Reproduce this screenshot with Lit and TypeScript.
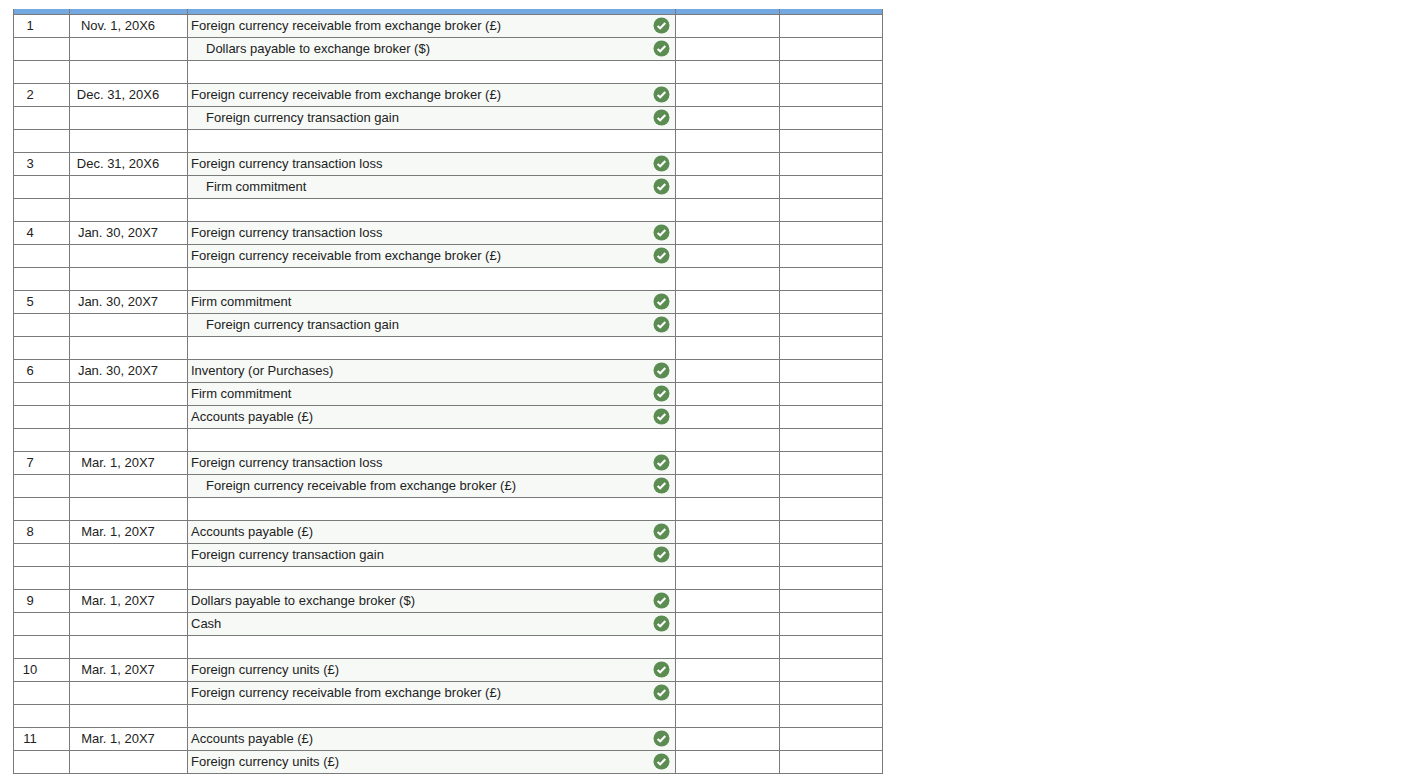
import { LitElement, html, css } from "lit";
import { customElement } from "lit/decorators.js";

interface Line { text: string; indent?: boolean }
interface Entry { no: number; date: string; lines: Line[]; blank: boolean }

const FX = "Foreign currency receivable from exchange broker (£)";
const GAIN = "Foreign currency transaction gain";
const LOSS = "Foreign currency transaction loss";
const FIRM = "Firm commitment";
const AP = "Accounts payable (£)";
const DOLL = "Dollars payable to exchange broker ($)";

const entries: Entry[] = [
  { no: 1, date: "Nov. 1, 20X6", lines: [{ text: FX }, { text: DOLL, indent: true }], blank: true },
  { no: 2, date: "Dec. 31, 20X6", lines: [{ text: FX }, { text: GAIN, indent: true }], blank: true },
  { no: 3, date: "Dec. 31, 20X6", lines: [{ text: LOSS }, { text: FIRM, indent: true }], blank: true },
  { no: 4, date: "Jan. 30, 20X7", lines: [{ text: LOSS }, { text: FX }], blank: true },
  { no: 5, date: "Jan. 30, 20X7", lines: [{ text: FIRM }, { text: GAIN, indent: true }], blank: true },
  { no: 6, date: "Jan. 30, 20X7", lines: [{ text: "Inventory (or Purchases)" }, { text: FIRM }, { text: AP }], blank: true },
  { no: 7, date: "Mar. 1, 20X7", lines: [{ text: LOSS }, { text: FX, indent: true }], blank: true },
  { no: 8, date: "Mar. 1, 20X7", lines: [{ text: AP }, { text: GAIN }], blank: true },
  { no: 9, date: "Mar. 1, 20X7", lines: [{ text: DOLL }, { text: "Cash" }], blank: true },
  { no: 10, date: "Mar. 1, 20X7", lines: [{ text: "Foreign currency units (£)" }, { text: FX }], blank: true },
  { no: 11, date: "Mar. 1, 20X7", lines: [{ text: AP }, { text: "Foreign currency units (£)" }], blank: false },
];

@customElement("app-root")
export class AppRoot extends LitElement {
  static styles = css`
    :host {
      display: block;
      padding: 9px 0 0 13px;
      background: #fff;
      font-family: "Liberation Sans", Arial, sans-serif;
      font-size: 13px;
      color: #222;
    }
    table {
      border-collapse: collapse;
      table-layout: fixed;
      width: 870px;
    }
    .c1 { width: 56px; }
    .c2 { width: 118px; }
    .c3 { width: 488px; }
    .c4 { width: 104px; }
    .c5 { width: 103px; }
    th, td {
      border: 1px solid #7a7a7a;
      box-sizing: content-box;
      font-weight: 400;
    }
    td {
      padding: 0 0 2px;
      height: 20px;
    }
    th {
      padding: 0;
      height: 5px;
      background: #74a8e0;
      border-top: 0;
    }
    .no { text-align: center; padding-right: 23px; }
    .date { text-align: center; padding-right: 21px; }
    .acct { background: #f6f9f6; }
    .row {
      display: flex;
      align-items: center;
      justify-content: space-between;
      height: 20px;
      padding: 0 5px 0 3px;
    }
    .indent { padding-left: 18px; }
    svg { display: block; width: 17px; height: 17px; margin-top: 1px; }
  `;

  private check() {
    return html`<svg viewBox="0 0 17 17" aria-hidden="true">
      <circle cx="8.5" cy="8.5" r="8" fill="#5b8c51"></circle>
      <path d="M4.6 8.9 7.2 11.3 12.3 6.1" fill="none" stroke="#fff" stroke-width="2.1"></path>
    </svg>`;
  }

  private line(e: Entry, l: Line, i: number) {
    return html`<tr>
      <td class="no">${i === 0 ? e.no : ""}</td>
      <td class="date">${i === 0 ? e.date : ""}</td>
      <td class="acct">
        <div class="row ${l.indent ? "indent" : ""}"><span>${l.text}</span>${this.check()}</div>
      </td>
      <td></td>
      <td></td>
    </tr>`;
  }

  render() {
    return html`<table>
      <colgroup>
        <col class="c1" /><col class="c2" /><col class="c3" /><col class="c4" /><col class="c5" />
      </colgroup>
      <thead><tr><th></th><th></th><th></th><th></th><th></th></tr></thead>
      <tbody>
        ${entries.map(
          (e) => html`${e.lines.map((l, i) => this.line(e, l, i))}
          ${e.blank ? html`<tr><td></td><td></td><td></td><td></td><td></td></tr>` : ""}`
        )}
      </tbody>
    </table>`;
  }
}
